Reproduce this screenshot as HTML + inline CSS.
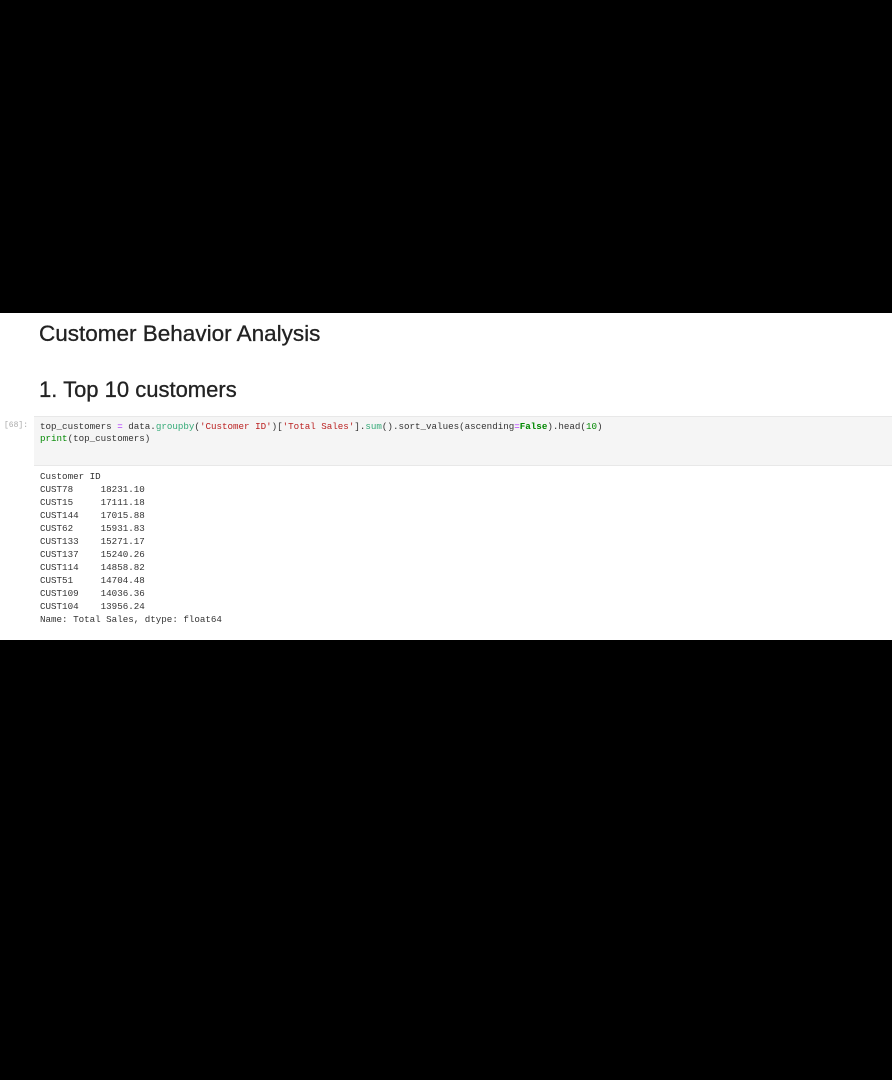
<!DOCTYPE html>
<html><head><style>
body{margin:0;background:#000;width:892px;height:1080px;position:relative;overflow:hidden;font-family:"Liberation Sans",sans-serif}
.w{position:absolute;left:0;top:313px;width:892px;height:327px;background:#fff}
.h{position:absolute;left:39px;color:#222;font-size:22.5px;white-space:nowrap;-webkit-text-stroke:0.3px #222}
.code{position:absolute;left:34px;top:416px;width:858px;height:48px;background:#f5f5f5;border-top:1px solid #e8e8e8;border-bottom:1px solid #e8e8e8}
.m{font-family:"Liberation Mono",monospace;font-size:9.2px;color:#333;white-space:pre;position:absolute}
.out div{height:13px;line-height:13px}
</style></head><body>
<div class="w"></div>
<div class="h" style="top:321px">Customer Behavior Analysis</div>
<div class="h" style="top:377px;font-size:22px">1. Top 10 customers</div>
<div class="m" style="left:4px;top:421px;color:#aaa;font-size:8px">[68]:</div>
<div class="code"></div>
<div class="m" style="left:40px;top:421px;line-height:12px">top_customers <span style="color:#a2f">=</span> data<span>.</span><span style="color:#3a7">groupby</span>(<span style="color:#b22">'Customer ID'</span>)[<span style="color:#b22">'Total Sales'</span>].<span style="color:#3a7">sum</span>().sort_values(ascending<span style="color:#a2f">=</span><b style="color:#080">False</b>).head(<span style="color:#080">10</span>)
<span style="color:#080">print</span>(top_customers)</div>
<div class="m out" style="left:40px;top:470px"><div>Customer ID</div><div>CUST78     18231.10</div><div>CUST15     17111.18</div><div>CUST144    17015.88</div><div>CUST62     15931.83</div><div>CUST133    15271.17</div><div>CUST137    15240.26</div><div>CUST114    14858.82</div><div>CUST51     14704.48</div><div>CUST109    14036.36</div><div>CUST104    13956.24</div><div>Name: Total Sales, dtype: float64</div></div>
</body></html>
